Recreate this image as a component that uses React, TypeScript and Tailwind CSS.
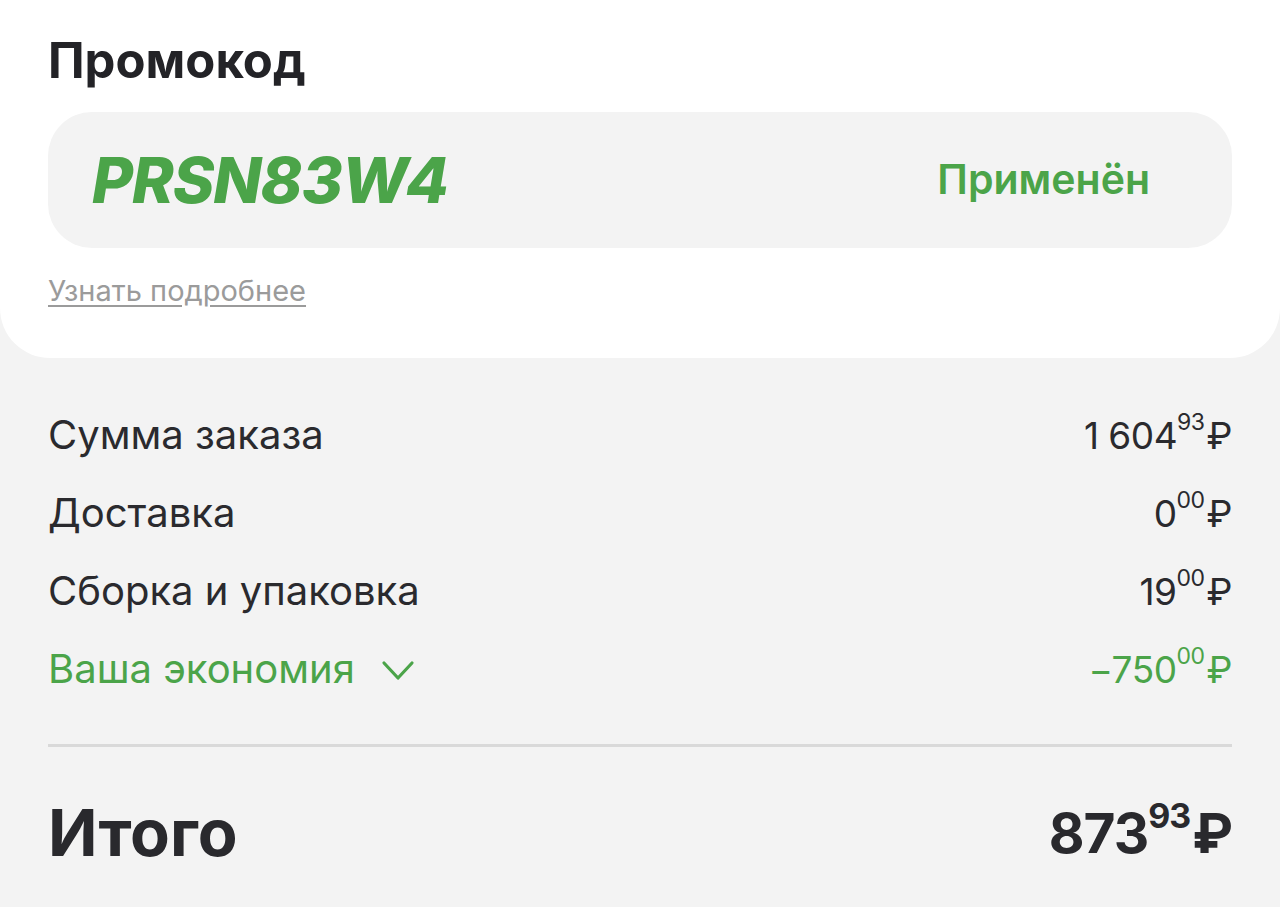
const font = { fontFamily: "Inter, 'Noto Sans', sans-serif" };

const Price = ({
  main,
  cents,
  className = "",
  supClass = "",
}: {
  main: string;
  cents: string;
  className?: string;
  supClass?: string;
}) => (
  <span className={`flex items-start leading-none ${className}`}>
    <span>{main}</span>
    <span className={supClass}>{cents}</span>
    <span>₽</span>
  </span>
);

const Chevron = () => (
  <svg width="34" height="22" viewBox="0 0 34 22" fill="none" className="mt-1">
    <path d="M3 3l14 15L31 3" stroke="currentColor" strokeWidth="3.2" strokeLinecap="round" strokeLinejoin="round" />
  </svg>
);

const Row = ({
  label,
  main,
  cents,
  green = false,
  chevron = false,
}: {
  label: string;
  main: string;
  cents: string;
  green?: boolean;
  chevron?: boolean;
}) => (
  <div
    className={`flex justify-between items-center h-[78px] ${
      green ? "text-[#4ba449]" : "text-[#2a2a2e]"
    }`}
  >
    <div className="flex items-center gap-[26px] text-[40px]">
      <span>{label}</span>
      {chevron && <Chevron />}
    </div>
    <Price
      main={main}
      cents={cents}
      className="text-[37px] tracking-[-0.5px]"
      supClass="text-[23px] -mt-[6px] mr-[2px]"
    />
  </div>
);

export default function App() {
  return (
    <div className="w-[1280px] h-[907px] bg-[#f3f3f3] overflow-hidden" style={font}>
      <div className="bg-white rounded-b-[50px] px-12 pt-[34px] pb-[50px]">
        <h1 className="text-[49px] font-bold text-[#232327] leading-[54px]">Промокод</h1>
        <div className="mt-[24px] h-[136px] bg-[#f3f3f3] rounded-[44px] flex items-center justify-between pl-[44px] pr-[82px]">
          <span className="text-[63px] font-extrabold italic text-[#4ba449] tracking-[-1px]">
            PRSN83W4
          </span>
          <span className="text-[41px] font-semibold text-[#4ba449]">Применён</span>
        </div>
        <a className="block mt-[26px] text-[29px] text-[#9b9b9b] underline underline-offset-4 leading-[34px]">
          Узнать подробнее
        </a>
      </div>

      <div className="px-12 pt-[38px]">
        <Row label="Сумма заказа" main="1 604" cents="93" />
        <Row label="Доставка" main="0" cents="00" />
        <Row label="Сборка и упаковка" main="19" cents="00" />
        <Row label="Ваша экономия" main="−750" cents="00" green chevron />
        <div className="mt-[36px] h-[3px] bg-[#d9d9d9]" />
        <div className="flex justify-between items-center h-[180px] text-[#29292d] font-bold -mt-[4px]">
          <span className="text-[65px]">Итого</span>
          <Price
            main="873"
            cents="93"
            className="text-[55px] tracking-[-1px]"
            supClass="text-[34px] -mt-[7px] mr-[2px]"
          />
        </div>
      </div>
    </div>
  );
}
